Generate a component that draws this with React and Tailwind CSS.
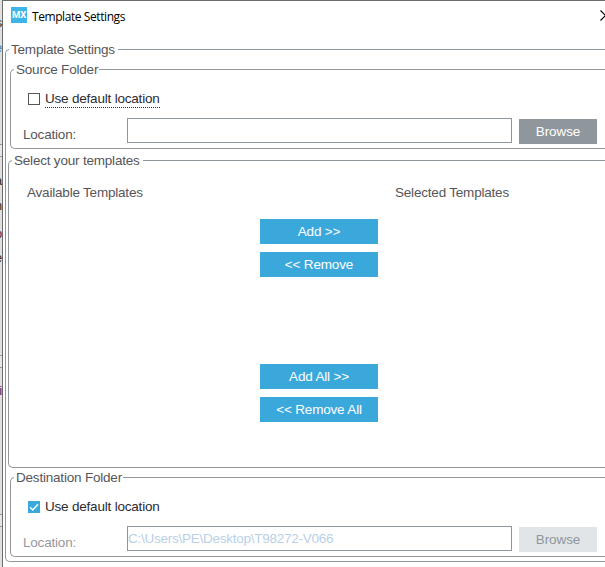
import clsx from 'clsx';

function Group({ title, className, legendClass, children }) {
    return (
        <fieldset className={clsx('min-w-0 rounded-l-[5px] border border-r-0 border-[#8f969c]', className)}>
            <legend className={clsx('h-[15px] whitespace-nowrap pl-[2px] leading-[15px] text-[#56565a]', legendClass)}>
                {title}
            </legend>
            {children}
        </fieldset>
    );
}

function ActionButton({ children }) {
    return (
        <button className="h-[25px] w-[118px] bg-[#3ba8dc] text-[13.5px] leading-[25px] tracking-[-0.17px] text-white">
            {children}
        </button>
    );
}

function FolderFields({ checked, path, disabled }) {
    return (
        <>
            <label className="ml-[17px] flex h-[18px] items-center gap-[5px] text-[#2b2b2f]">
                <span
                    className={clsx(
                        'flex size-3 items-center justify-center',
                        checked ? 'bg-[#3ba8dc]' : 'border border-[#56565a]',
                    )}
                >
                    {checked && (
                        <svg viewBox="0 0 12 12" className="size-3" fill="none" stroke="white" strokeWidth="1.4">
                            <path d="M2 6.2 4.8 9 10 3.2" />
                        </svg>
                    )}
                </span>
                <span
                    className={clsx(
                        'h-[18px] border-b leading-[17px]',
                        checked ? 'border-transparent' : 'border-dotted border-[#2b2b2f]',
                    )}
                >
                    Use default location
                </span>
            </label>
            <div className="mt-[10px] flex">
                <span className={clsx('ml-3 w-[104px] pt-2 leading-[17px]', disabled ? 'text-[#97979b]' : 'text-[#56565a]')}>
                    Location:
                </span>
                <div className="h-[25px] w-[385px] border border-[#8f969c] leading-[23px] tracking-[-0.25px] text-[#b9d0e8]">{path}</div>
                <button
                    className={clsx(
                        'ml-[7px] mt-px h-[25px] w-[78px] text-[13.5px] leading-[25px] tracking-[-0.1px]',
                        disabled ? 'bg-[#e1e5e8] text-[#8f969c]' : 'bg-[#8f969c] text-white',
                    )}
                >
                    Browse
                </button>
            </div>
        </>
    );
}

// Slivers of the window behind the dialog
const letters = [
    { char: 's', className: 'top-[14px] text-[#333]' },
    { char: 'e', className: 'top-[39px] text-[#3f88b5]' },
    { char: 'a', className: 'top-[172px] text-[#333]' },
    { char: 'h', className: 'top-[197px] text-[#333]' },
    { char: 'p', className: 'top-[225px] text-[#5b2a5e]' },
    { char: 'e', className: 'top-[249px] text-[#333]' },
    { char: 'i', className: 'top-[382px] text-[#4b2a86]' },
];
const rules = ['top-[144px]', 'top-[355px]', 'top-[514px]'];

export default function App() {
    return (
        <div className="flex h-[567px] w-[605px] overflow-hidden bg-white font-['Liberation_Sans',Arial,sans-serif] text-[13.5px] tracking-[-0.2px]">
            <div className="relative w-[2px] shrink-0 overflow-hidden bg-[#e0e0e0]">
                {rules.map((top) => (
                    <div key={top} className={clsx('absolute h-[13px] w-full border-y border-[#98989c] bg-[#e6e6e6]', top)} />
                ))}
                {letters.map(({ char, className }) => (
                    <span key={className} className={clsx('absolute right-0 leading-[18px]', className)}>
                        {char}
                    </span>
                ))}
            </div>

            <div className="w-[603px] border-l border-t border-[#6b6b6b] pl-[2px]">
                <div className="flex h-[41px] items-start pl-[6px] pt-[6px]">
                    <div className="size-4 bg-[#3db5e6] text-center font-['Roboto',sans-serif] text-[9.5px] font-bold leading-4 text-white">
                        MX
                    </div>
                    <h1 className="ml-[5px] pt-px font-['Open_Sans',sans-serif] text-[12px] leading-[18px] tracking-[-0.42px] text-black">
                        Template Settings
                    </h1>
                    <svg viewBox="0 0 11 11" className="ml-auto -mr-[6px] mt-[3px] size-[11px] shrink-0" fill="none" stroke="black" strokeWidth="1.1">
                        <path d="M.5.5l10 10M10.5.5l-10 10" />
                    </svg>
                </div>

                <Group title="Template Settings" className="pb-1" legendClass="ml-[3px] w-[109px]">
                    <Group title="Source Folder" className="ml-1 mt-[5px] h-[87px]" legendClass="ml-[3px] w-[85px]">
                        <div className="pt-[13px]">
                            <FolderFields />
                        </div>
                    </Group>

                    <Group title="Select your templates" className="ml-[2px] mt-1 h-[315px]" legendClass="ml-[3px] w-[131px]">
                        <div className="flex pt-[16px] leading-[17px] text-[#56565a]">
                            <span className="ml-[18px] w-[368px]">Available Templates</span>
                            <span>Selected Templates</span>
                        </div>
                        <div className="ml-[251px] mt-[18px] flex flex-col gap-2">
                            <ActionButton>Add &gt;&gt;</ActionButton>
                            <ActionButton>&lt;&lt; Remove</ActionButton>
                        </div>
                        <div className="ml-[251px] mt-[87px] flex flex-col gap-2">
                            <ActionButton>Add All &gt;&gt;</ActionButton>
                            <ActionButton>&lt;&lt; Remove All</ActionButton>
                        </div>
                    </Group>

                    <Group title="Destination Folder" className="ml-1 mt-[2px] h-[87px]" legendClass="ml-[3px] w-[109px]">
                        <div className="pt-[13px]">
                            <FolderFields checked disabled path="C:\Users\PE\Desktop\T98272-V066" />
                        </div>
                    </Group>
                </Group>
            </div>
        </div>
    );
}
